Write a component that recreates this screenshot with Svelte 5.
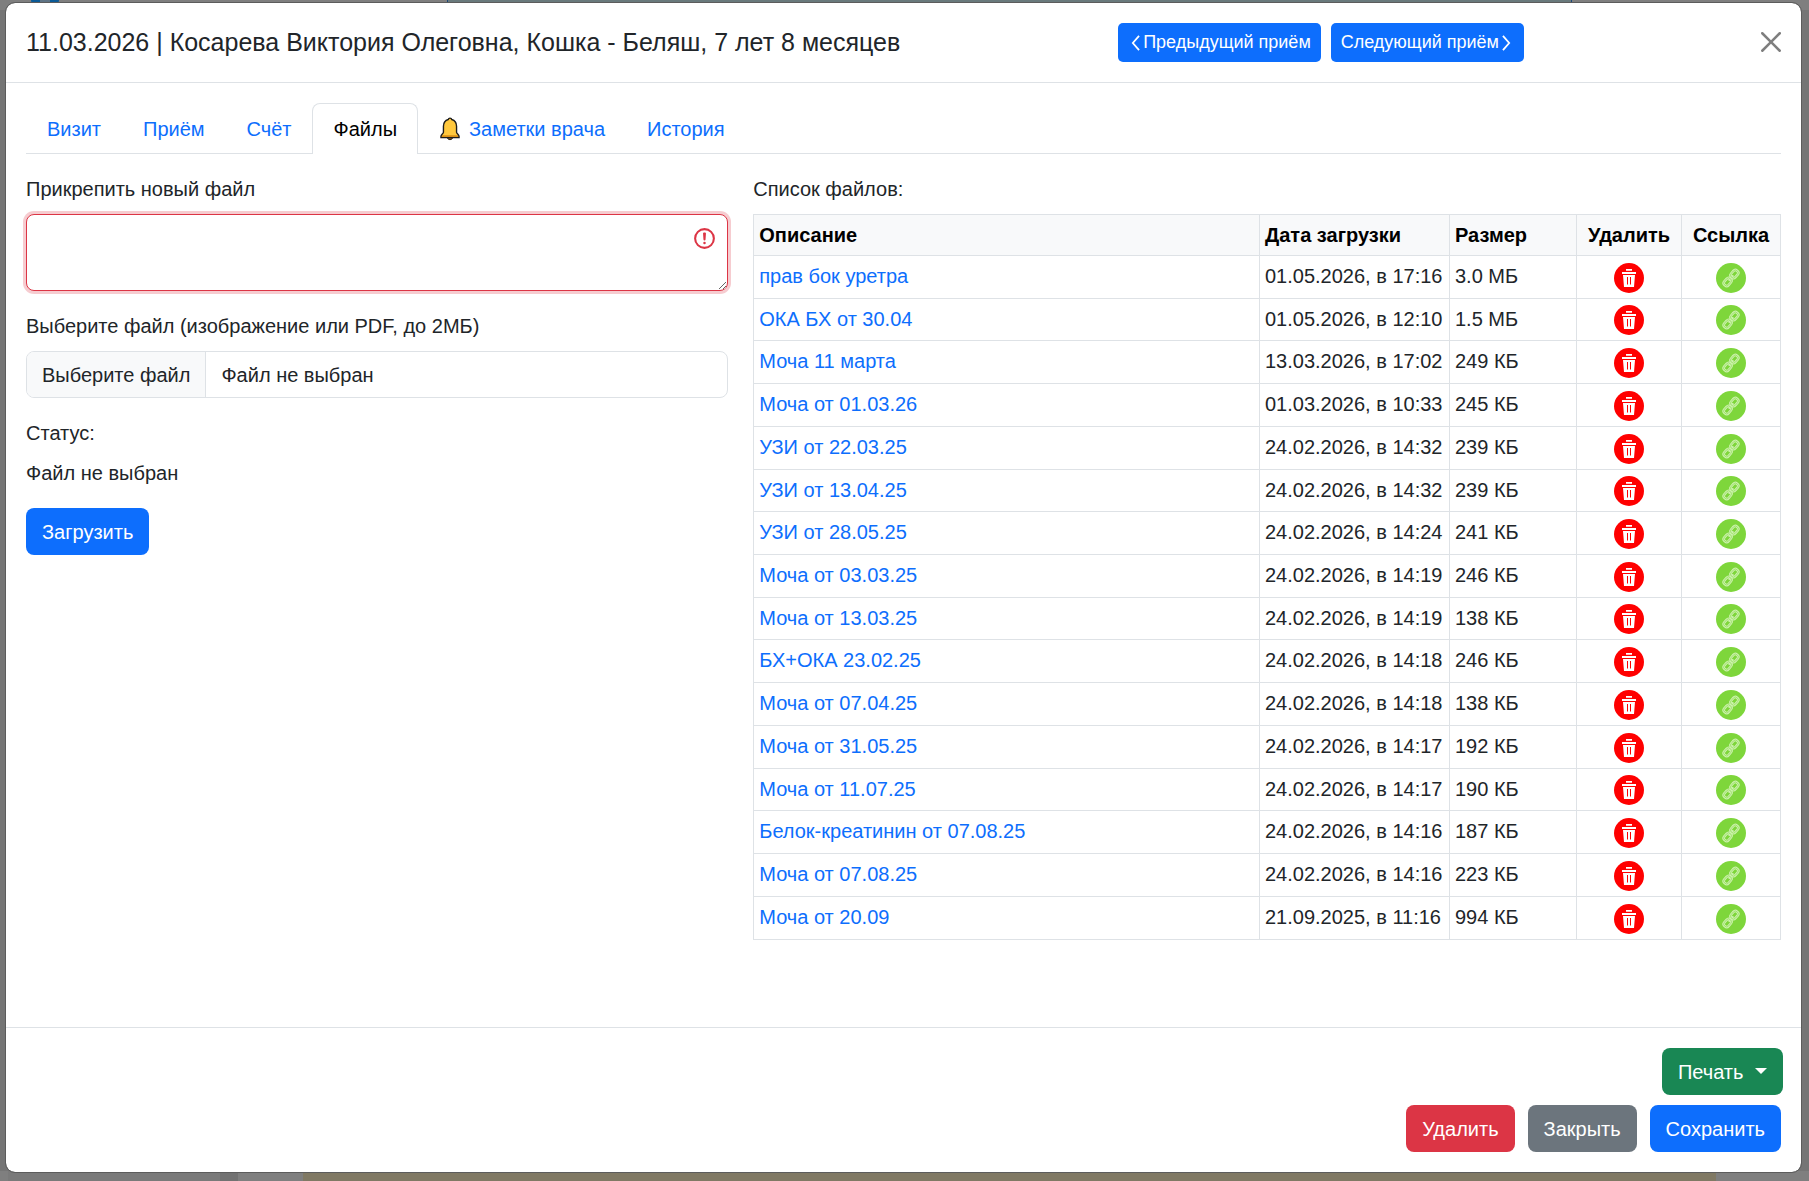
<script>
	let tabs = ['Визит', 'Приём', 'Счёт', 'Файлы', 'Заметки врача', 'История'];
	let active = $state('Файлы');
	let description = $state('');
	let fileName = $state('');

	let files = $state([
		{ name: 'прав бок уретра', date: '01.05.2026, в 17:16', size: '3.0 МБ' },
		{ name: 'ОКА БХ от 30.04', date: '01.05.2026, в 12:10', size: '1.5 МБ' },
		{ name: 'Моча 11 марта', date: '13.03.2026, в 17:02', size: '249 КБ' },
		{ name: 'Моча от 01.03.26', date: '01.03.2026, в 10:33', size: '245 КБ' },
		{ name: 'УЗИ от 22.03.25', date: '24.02.2026, в 14:32', size: '239 КБ' },
		{ name: 'УЗИ от 13.04.25', date: '24.02.2026, в 14:32', size: '239 КБ' },
		{ name: 'УЗИ от 28.05.25', date: '24.02.2026, в 14:24', size: '241 КБ' },
		{ name: 'Моча от 03.03.25', date: '24.02.2026, в 14:19', size: '246 КБ' },
		{ name: 'Моча от 13.03.25', date: '24.02.2026, в 14:19', size: '138 КБ' },
		{ name: 'БХ+ОКА 23.02.25', date: '24.02.2026, в 14:18', size: '246 КБ' },
		{ name: 'Моча от 07.04.25', date: '24.02.2026, в 14:18', size: '138 КБ' },
		{ name: 'Моча от 31.05.25', date: '24.02.2026, в 14:17', size: '192 КБ' },
		{ name: 'Моча от 11.07.25', date: '24.02.2026, в 14:17', size: '190 КБ' },
		{ name: 'Белок-креатинин от 07.08.25', date: '24.02.2026, в 14:16', size: '187 КБ' },
		{ name: 'Моча от 07.08.25', date: '24.02.2026, в 14:16', size: '223 КБ' },
		{ name: 'Моча от 20.09', date: '21.09.2025, в 11:16', size: '994 КБ' },
	]);

	function removeFile(file) {
		files = files.filter((f) => f !== file);
	}

	function pickFile(event) {
		fileName = event.currentTarget.files[0]?.name ?? '';
	}
</script>

<svelte:head>
	<title>Приём</title>
</svelte:head>

<div class="page">
	<!-- dimmed page that shows around the dialog -->
	<div class="behind" aria-hidden="true">
		<div class="strip top">
			<span class="avatar"></span>
			<span class="event"></span>
		</div>
		<div class="strip bottom">
			<span class="side"></span>
			<span class="slot"></span>
		</div>
	</div>

	<div class="modal" role="dialog" aria-labelledby="modal-title">
		<header>
			<h5 id="modal-title">11.03.2026 | Косарева Виктория Олеговна, Кошка - Беляш, 7 лет 8 месяцев</h5>
			<div class="visits">
				<button class="btn btn-sm primary">
					<svg class="chevron" viewBox="0 0 10 18"><path d="M9 1 2 9l7 8" /></svg>Предыдущий приём
				</button>
				<button class="btn btn-sm primary">
					Следующий приём<svg class="chevron" viewBox="0 0 10 18"><path d="m1 1 7 8-7 8" /></svg>
				</button>
			</div>
			<button class="close" aria-label="Закрыть окно">
				<svg viewBox="0 0 16 16"><path d="M.293.293a1 1 0 0 1 1.414 0L8 6.586 14.293.293a1 1 0 1 1 1.414 1.414L9.414 8l6.293 6.293a1 1 0 0 1-1.414 1.414L8 9.414l-6.293 6.293a1 1 0 0 1-1.414-1.414L6.586 8 .293 1.707a1 1 0 0 1 0-1.414z" /></svg>
			</button>
		</header>

		<main>
			<nav>
				{#each tabs as tab}
					<button class="tab" class:active={active === tab} onclick={() => (active = tab)}>
						{#if tab === 'Заметки врача'}
							<svg class="bell" viewBox="0 0 22 26">
								<path d="M11 24.500c-1.800 0-2.800-1-3-2.500h6c-.2 1.500-1.200 2.500-3 2.500z" fill="#8a5a12" stroke="#1c1c1c" />
								<path d="M11 1.200c-1 0-1.700.6-1.900 1.500C5.700 3.700 3.900 6.500 3.900 10v6.500c0 1.600-2.700 2.400-2.700 4.500v1.300h19.600V21c0-2.100-2.700-2.900-2.700-4.500V10c0-3.500-1.800-6.300-5.200-7.300-.2-.9-.9-1.500-1.900-1.500z" fill="#ffc83d" />
								<path d="M2 19.800h18l.6 2.400H1.400z" fill="#d98f14" />
								<path d="M11 1.200c-1 0-1.700.6-1.900 1.500C5.700 3.700 3.900 6.500 3.900 10v6.500c0 1.600-2.700 2.400-2.700 4.500v1.300h19.600V21c0-2.100-2.700-2.900-2.700-4.500V10c0-3.500-1.800-6.300-5.200-7.300-.2-.9-.9-1.500-1.900-1.500z" fill="none" stroke="#1c1c1c" stroke-width="1.500" />
							</svg>
						{/if}
						{tab}
					</button>
				{/each}
			</nav>

			<div class="columns">
				<form onsubmit={(e) => e.preventDefault()}>
					<label for="description">Прикрепить новый файл</label>
					<div class="field">
						<textarea id="description" rows="2" bind:value={description}></textarea>
						<svg class="invalid" viewBox="0 0 12 12">
							<circle cx="6" cy="6" r="4.500" />
							<path d="M5.800 3.600h.4L6 6.500z" stroke-linejoin="round" />
							<circle class="dot" cx="6" cy="8.200" r=".6" />
						</svg>
					</div>

					<label for="file">Выберите файл (изображение или PDF, до 2МБ)</label>
					<div class="file">
						<input id="file" type="file" accept="image/*,.pdf" onchange={pickFile} />
						<span class="choose">Выберите файл</span>
						<span class="chosen">{fileName || 'Файл не выбран'}</span>
					</div>

					<p class="status">Статус:</p>
					<p>{fileName || 'Файл не выбран'}</p>
					<button class="btn primary">Загрузить</button>
				</form>

				<section>
					<p class="status">Список файлов:</p>
					<table>
						<thead>
							<tr>
								<th>Описание</th>
								<th class="date">Дата загрузки</th>
								<th class="size">Размер</th>
								<th class="remove">Удалить</th>
								<th class="link">Ссылка</th>
							</tr>
						</thead>
						<tbody>
							{#each files as file (file)}
								<tr>
									<td><a href="#file">{file.name}</a></td>
									<td>{file.date}</td>
									<td>{file.size}</td>
									<td class="center">
										<button class="icon" aria-label="Удалить файл" onclick={() => removeFile(file)}>
											<svg viewBox="0 0 30 30">
												<circle cx="15" cy="15" r="15" fill="#f00" />
												<path d="M12 6h6v1.800h-6zM8 8.900h14v2H8zM9 11.900h12l-1 12H10z" fill="#fff" />
												<path d="M13.500 14v7.500M16.500 14v7.500" stroke="#f00" />
											</svg>
										</button>
									</td>
									<td class="center">
										<button class="icon" aria-label="Скопировать ссылку">
											<svg viewBox="0 0 30 30">
												<circle cx="15" cy="15" r="15" fill="#7ed63b" />
												<g transform="rotate(-49 15 15)" fill="none">
													<g stroke="#cff2b0" stroke-width="2.600">
														<rect x="5.500" y="12.200" width="8.600" height="5.600" rx="2.600" />
														<rect x="15.900" y="12.200" width="8.600" height="5.600" rx="2.600" />
														<path d="M11.500 15h7" stroke-width="1.800" />
													</g>
													<g stroke="#8fdc55" stroke-width=".7">
														<rect x="5.500" y="12.200" width="8.600" height="5.600" rx="2.600" />
														<rect x="15.900" y="12.200" width="8.600" height="5.600" rx="2.600" />
													</g>
												</g>
											</svg>
										</button>
									</td>
								</tr>
							{/each}
						</tbody>
					</table>
				</section>
			</div>
		</main>

		<footer>
			<button class="btn success">Печать <span class="caret"></span></button>
			<div class="actions">
				<button class="btn danger">Удалить</button>
				<button class="btn secondary">Закрыть</button>
				<button class="btn primary">Сохранить</button>
			</div>
		</footer>
	</div>
</div>

<style>
	:global(body) {
		background: #757575;
		color: #212529;
		font: 20px/30px "Liberation Sans", Arial, sans-serif;
	}
	* {
		box-sizing: border-box;
	}
	button, textarea {
		font: inherit;
	}
	h5, p {
		margin: 0;
	}

	.page {
		position: relative;
		display: flex;
		min-height: 100vh;
		padding: 2px 7px 8px 5px;
	}
	.behind {
		position: absolute;
		inset: 0;
		display: flex;
		flex-direction: column;
		justify-content: space-between;
		overflow: hidden;
	}
	.strip {
		display: flex;
		height: 10px;
		background: #7f7f7f;
	}
	.top {
		padding: 0 237px 0 31px;
	}
	.avatar {
		width: 28px;
		height: 4px;
		margin-right: 388px;
		border: solid #0a5a96;
		border-width: 0 9px;
		border-radius: 0 0 14px 14px;
		background: #5f7485;
	}
	.event {
		flex: 1;
		border: solid #1a4678;
		border-width: 0 1px;
		background: #69797c;
	}
	.bottom {
		padding: 0 93px 0 8px;
	}
	.side {
		width: 230px;
		margin-right: 65px;
		border-right: 18px solid #727272;
		background: #7a7a7a;
	}
	.slot {
		flex: 1;
		background: #807964;
	}

	.modal {
		position: relative;
		display: flex;
		flex: 1;
		flex-direction: column;
		border: 1px solid #5c5c5c;
		border-radius: 10px;
		background: #fff;
		background-clip: padding-box;
	}

	header {
		display: flex;
		align-items: flex-start;
		padding: 20px;
		border-bottom: 1px solid #dee2e6;
		line-height: 38px;
	}
	h5 {
		flex: 1;
		font-size: 25px;
		font-weight: 400;
	}
	.visits {
		display: flex;
		gap: 10px;
	}

	.btn {
		padding: 9px 16px 7px;
		border: 0;
		border-radius: 8px;
		color: #fff;
		line-height: 31px;
		cursor: pointer;
	}
	.btn-sm {
		display: flex;
		align-items: center;
		padding: 6px 10px;
		border-radius: 5px;
		font-size: 18px;
		line-height: 27px;
	}
	.primary {
		background: #0d6efd;
	}
	.success {
		background: #198754;
	}
	.danger {
		background: #dc3545;
	}
	.secondary {
		background: #6c757d;
	}
	.chevron {
		width: 9px;
		height: 16px;
		margin: 0 3px;
		fill: none;
		stroke: #fff;
		stroke-width: 2;
	}
	.close {
		display: flex;
		margin: 9px 0 0 237px;
		padding: 0;
		border: 0;
		background: none;
		opacity: .5;
	}
	.close svg {
		width: 20px;
		height: 20px;
	}

	main {
		flex: 1;
		padding: 20px;
	}
	nav {
		display: flex;
		border-bottom: 1px solid #dee2e6;
	}
	.tab {
		display: flex;
		align-items: center;
		gap: 8px;
		margin-bottom: -1px;
		padding: 10px 20px;
		border: 1px solid transparent;
		border-bottom: 0;
		border-radius: 8px 8px 0 0;
		background: none;
		color: #0d6efd;
		cursor: pointer;
	}
	.tab.active {
		border-color: #dee2e6;
		background: #fff;
		color: #000;
	}
	.bell {
		width: 22px;
		height: 24px;
	}

	.columns {
		display: grid;
		grid-template-columns: 41fr 60fr;
		gap: 25px;
		padding-top: 20px;
	}
	label, .status {
		display: block;
		margin-bottom: 10px;
	}
	.field {
		position: relative;
		margin-bottom: 20px;
	}
	textarea {
		display: block;
		width: 100%;
		height: 77px;
		padding: 8px 15px;
		border: 1px solid #dc3545;
		border-radius: 8px;
		outline: 0;
		box-shadow: 0 0 0 3px rgba(220, 53, 69, .25);
		resize: vertical;
	}
	.invalid {
		position: absolute;
		top: 12px;
		right: 11px;
		width: 25px;
		height: 25px;
		fill: none;
		stroke: #dc3545;
		pointer-events: none;
	}
	.dot {
		fill: #dc3545;
		stroke: none;
	}
	.file {
		position: relative;
		display: flex;
		margin-bottom: 20px;
		border: 1px solid #dee2e6;
		border-radius: 8px;
		line-height: 31px;
		overflow: hidden;
	}
	/* the native control lies invisible over the drawn one */
	.file input {
		position: absolute;
		inset: 0;
		width: 100%;
		opacity: 0;
	}
	.choose, .chosen {
		padding: 8px 15px 6px;
	}
	.choose {
		border-right: 1px solid #dee2e6;
		background: #f8f9fa;
	}
	form .btn {
		margin-top: 20px;
	}

	table {
		width: 100%;
		border-collapse: collapse;
		table-layout: fixed;
	}
	th, td {
		padding: 5px;
		border: 1px solid #dee2e6;
		text-align: left;
		vertical-align: top;
		white-space: nowrap;
	}
	th {
		background: #f8f9fa;
		color: #000;
	}
	.date {
		width: 190px;
	}
	.size {
		width: 127px;
	}
	.remove {
		width: 105px;
		text-align: center;
	}
	.link {
		width: 99px;
		text-align: center;
	}
	.center {
		text-align: center;
	}
	a {
		color: #0d6efd;
		text-decoration: none;
	}
	.icon {
		width: 30px;
		height: 30px;
		padding: 0;
		border: 0;
		background: none;
		vertical-align: middle;
		cursor: pointer;
	}
	.icon svg {
		display: block;
	}

	footer {
		display: flex;
		flex-direction: column;
		align-items: flex-end;
		gap: 10px;
		padding: 20px 18px;
		border-top: 1px solid #dee2e6;
	}
	.actions {
		display: flex;
		gap: 13px;
		padding-right: 2px;
	}
	.caret {
		display: inline-block;
		margin-left: 6px;
		border: 6px solid transparent;
		border-top-color: #fff;
		border-bottom: 0;
		vertical-align: 5px;
	}
</style>
